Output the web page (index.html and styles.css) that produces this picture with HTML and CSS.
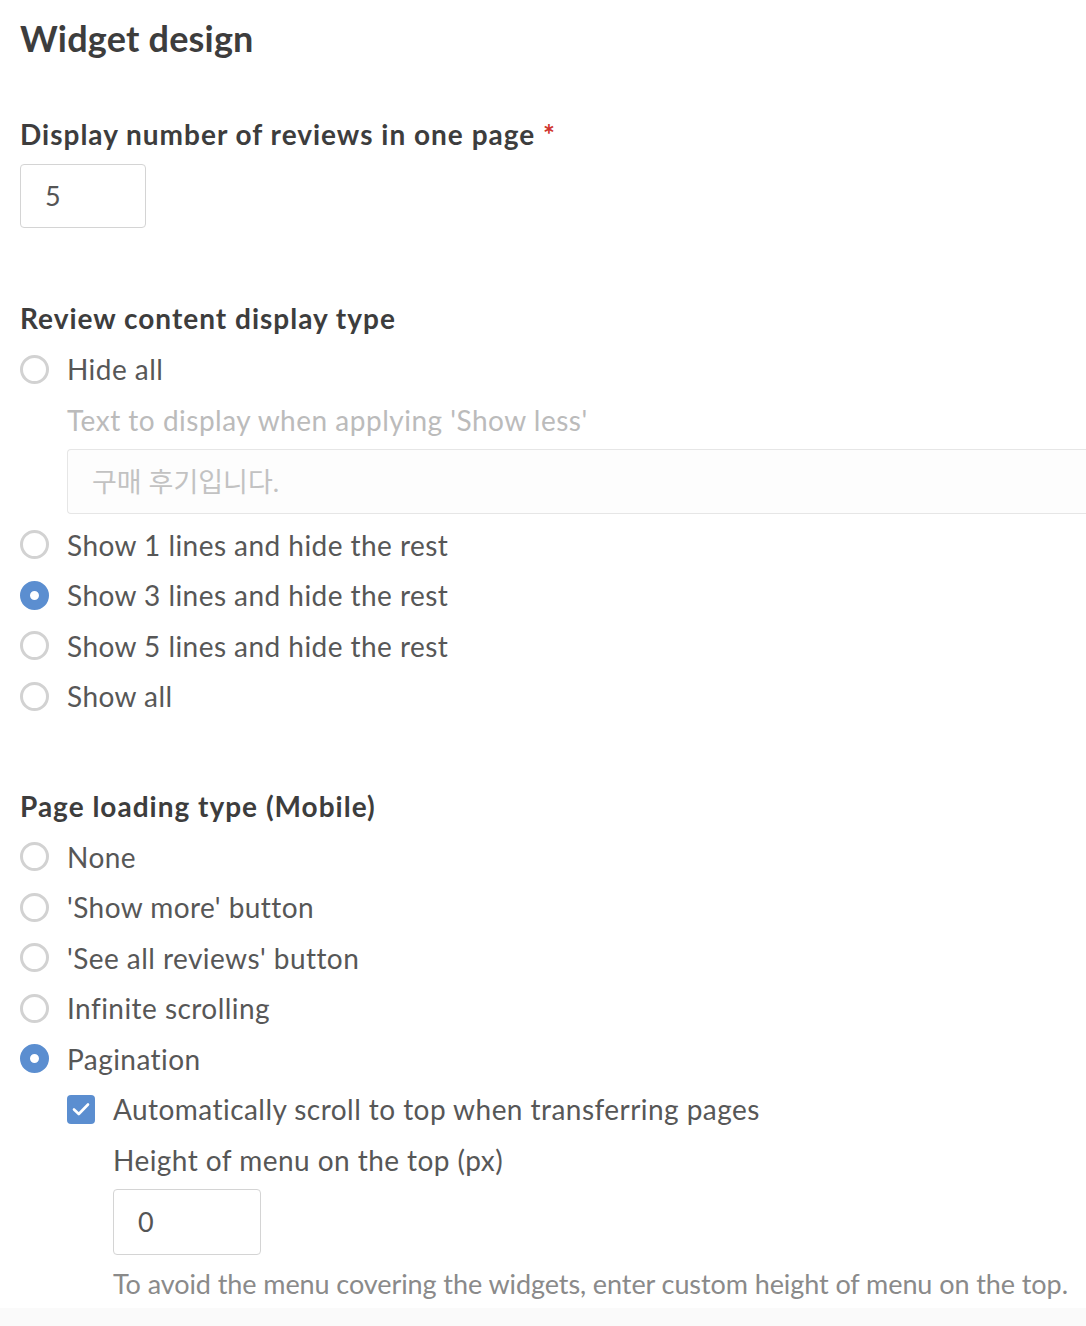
FILE: index.html
```html
<!DOCTYPE html>
<html>
<head>
  <meta charset="utf-8">
  <title>Widget design</title>
  <link rel="stylesheet" href="styles.css">
</head>
<body>
  <div class="page">
    <h1 class="page__title">Widget design</h1>

    <!-- number per page -->
    <div class="field field--first">
      <div class="field__label">Display number of reviews in one page <span class="required">*</span></div>
      <div class="num-input">5</div>
    </div>

    <!-- content display type -->
    <div class="field">
      <div class="field__label">Review content display type</div>
      <div class="options">
        <label class="option"><span class="radio"></span>Hide all</label>
        <div class="sub">
          <div class="sub__hint">Text to display when applying 'Show less'</div>
          <div class="text-input">구매 후기입니다.</div>
        </div>
        <label class="option option--after-input"><span class="radio"></span>Show 1 lines and hide the rest</label>
        <label class="option"><span class="radio radio--on"></span>Show 3 lines and hide the rest</label>
        <label class="option"><span class="radio"></span>Show 5 lines and hide the rest</label>
        <label class="option"><span class="radio"></span>Show all</label>
      </div>
    </div>

    <!-- page loading -->
    <div class="field">
      <div class="field__label">Page loading type (Mobile)</div>
      <div class="options">
        <label class="option"><span class="radio"></span>None</label>
        <label class="option"><span class="radio"></span>'Show more' button</label>
        <label class="option"><span class="radio"></span>'See all reviews' button</label>
        <label class="option"><span class="radio"></span>Infinite scrolling</label>
        <label class="option"><span class="radio radio--on"></span>Pagination</label>
        <div class="sub">
          <label class="option option--check">
            <span class="checkbox">
              <svg width="18" height="14" viewBox="0 0 18 14"><path d="M2 7.5 L6.8 12 L16 2.5" fill="none" stroke="#fff" stroke-width="2.6" stroke-linecap="round" stroke-linejoin="round"/></svg>
            </span>
            Automatically scroll to top when transferring pages
          </label>
          <div class="sub sub--deep">
            <div class="option">Height of menu on the top (px)</div>
            <div class="num-input num-input--wide">0</div>
            <div class="help">To avoid the menu covering the widgets, enter custom height of menu on the top.</div>
          </div>
        </div>
      </div>
    </div>
  </div>
  <div class="page__foot"></div>
</body>
</html>
```

FILE: styles.css
```css
* {
  box-sizing: border-box;
}

body {
  margin: 0px;
  padding: 0px;
  font-family: Lato, "Noto Sans CJK KR", sans-serif;
  color: #555;
  background: #fff;
  overflow: hidden;
}

.page {
  padding: 16px 0 0 20px;
  height: 1308px;
}

.page__foot {
  height: 18px;
  background: #fafafa;
}

.page__title {
  margin: 0;
  font-size: 36px;
  line-height: 44px;
  font-weight: 700;
  letter-spacing: 0.2px;
  color: #3d3d3d;
}

.field {
  margin-top: 70px;
}

.field--first {
  margin-top: 54px;
}

.field + .field:last-child {
  margin-top: 64px;
}

.field__label {
  font-size: 28px;
  line-height: 40px;
  font-weight: 700;
  letter-spacing: 1px;
  color: #3d3d3d;
}

.required {
  color: #d0342c;
}

.num-input {
  margin-top: 10px;
  width: 126px;
  height: 64px;
  padding-left: 24px;
  border: 1px solid #d4d4d4;
  border-radius: 4px;
  font-size: 27px;
  line-height: 62px;
  color: #555;
}

.num-input--wide {
  margin-top: 4px;
  width: 148px;
  height: 66px;
  line-height: 64px;
}

.options {
  margin-top: 6px;
}

.option {
  display: flex;
  align-items: center;
  height: 50.5px;
  font-size: 28px;
  letter-spacing: 0.45px;
  color: #575757;
}

.option--after-input {
  margin-top: 6px;
}

.radio {
  width: 29px;
  height: 29px;
  margin-right: 18px;
  border: 3px solid #d2d2d2;
  border-radius: 50%;
  flex-shrink: 0;
}

.radio--on {
  border: 10.5px solid #5b8ed0;
  background: #fff;
}

.sub {
  padding-left: 47px;
}

.sub--deep {
  padding-left: 46px;
}

.sub__hint {
  height: 50px;
  line-height: 50px;
  font-size: 28px;
  letter-spacing: 0.5px;
  color: #bbb;
}

/* runs off the right edge of the shot */
.text-input {
  margin-top: 4px;
  height: 65px;
  padding-left: 24px;
  border: 1px solid #e6e6e6;
  border-right: 0;
  border-radius: 4px 0 0 4px;
  background: #fdfdfd;
  font-size: 27px;
  line-height: 63px;
  color: #c2c2c2;
}

.checkbox {
  display: flex;
  align-items: center;
  justify-content: center;
  width: 28px;
  height: 29px;
  margin-right: 18px;
  border-radius: 4px;
  background: #5b8ed0;
  flex-shrink: 0;
}

.help {
  margin-top: 9px;
  font-size: 27px;
  line-height: 40px;
  letter-spacing: -0.08px;
  color: #8a8a8a;
  white-space: nowrap;
}
```
